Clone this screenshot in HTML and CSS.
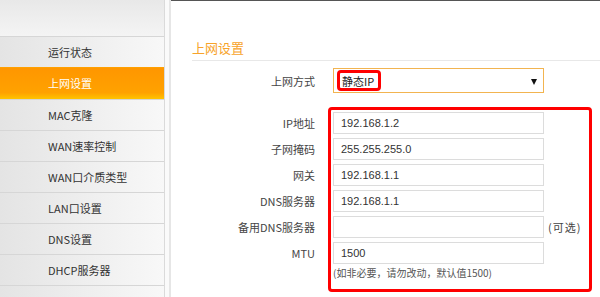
FILE: index.html
```html
<!DOCTYPE html>
<html lang="zh-CN">
<head>
  <meta charset="UTF-8" />
  <meta name="viewport" content="width=device-width, initial-scale=1.0">
  <title>上网设置</title>
  <link rel="stylesheet" href="styles.css">
</head>
<body>

  <div class="sidebar">
    <div class="sidebar-top"></div>
    <a class="menu-item" href="#">运行状态</a>
    <a class="menu-item active" href="#">上网设置</a>
    <a class="menu-item" href="#">MAC克隆</a>
    <a class="menu-item" href="#">WAN速率控制</a>
    <a class="menu-item" href="#">WAN口介质类型</a>
    <a class="menu-item" href="#">LAN口设置</a>
    <a class="menu-item" href="#">DNS设置</a>
    <a class="menu-item" href="#">DHCP服务器</a>
    <a class="menu-item last" href="#"></a>
  </div>

  <div class="divider"></div>

  <div class="main">
    <h1>上网设置</h1>

    <div class="form">
      <label>上网方式</label>
      <div class="select">
        <span class="select-value">静态IP</span>
        <span class="select-arrow"></span>
        <span class="mark mark-small"></span>
      </div>
      <span></span>

      <div class="fields">
        <label>IP地址</label>
        <div class="input">192.168.1.2</div>
        <span></span>

        <label>子网掩码</label>
        <div class="input">255.255.255.0</div>
        <span></span>

        <label>网关</label>
        <div class="input">192.168.1.1</div>
        <span></span>

        <label>DNS服务器</label>
        <div class="input">192.168.1.1</div>
        <span></span>

        <label>备用DNS服务器</label>
        <div class="input"></div>
        <span class="hint">(可选)</span>

        <label>MTU</label>
        <div class="input">1500</div>
        <span></span>

        <span></span>
        <div class="note">(如非必要，请勿改动，默认值1500)</div>
        <span></span>

        <span class="mark mark-big"></span>
      </div>
    </div>
  </div>

</body>
</html>
```

FILE: styles.css
```css
* {
  box-sizing: border-box;
}
body {
  margin: 0;
  font-family: "Noto Sans CJK SC", "Noto Sans", sans-serif;
  background: #fff;
  display: flex;
  height: 297px;
  overflow: hidden;
}

.sidebar {
  width: 165px;
  height: 297px;
  flex-shrink: 0;
  overflow: hidden;
  background: linear-gradient(to right, #e4e4e4, #f8f8f8);
  border-right: 1px solid #dadada;
  display: flex;
  flex-direction: column;
}
.sidebar-top {
  height: 36px;
  flex-shrink: 0;
  background: linear-gradient(to bottom, #e8e8e8, #f4f4f4);
}
.menu-item {
  height: 31px;
  flex-shrink: 0;
  border-top: 1px solid #d6d6d6;
  padding-left: 48px;
  line-height: 30px;
  font-size: 11px;
  color: #333;
  text-decoration: none;
}
.menu-item.last {
  flex-shrink: 1;
}
.menu-item.active {
  background: linear-gradient(to bottom, #ff9600, #ffa200 80%, #ffc400);
  color: #fff;
  border-top-color: #ffa000;
  height: 32px;
}

.divider {
  width: 6px;
  flex-shrink: 0;
  background: #fafafa;
  border-right: 2px solid #e6e6e6;
}

.main {
  flex-grow: 1;
  height: 297px;
  overflow: hidden;
  border-top: 1px solid #555;
  padding-left: 21px;
}

h1 {
  margin: 37px 0 0;
  height: 23px;
  line-height: 20px;
  font-size: 13px;
  font-weight: normal;
  color: #f7a32a;
  border-bottom: 1px solid #e8e8e8;
}

.form {
  margin-top: 7px;
  display: grid;
  grid-template-columns: 123px 211px auto;
  column-gap: 18px;
  align-items: center;
}

label {
  text-align: right;
  font-size: 11px;
  color: #444;
}

.select {
  position: relative;
  height: 25px;
  border: 1px solid #f2b450;
  display: flex;
  align-items: center;
  justify-content: space-between;
  padding: 0 6px 0 8px;
}
.select-value {
  font-size: 11px;
  color: #222;
}
.select-arrow {
  width: 0;
  height: 0;
  border-left: 3px solid transparent;
  border-right: 3px solid transparent;
  border-top: 6px solid #111;
  margin-top: 2px;
}

.fields {
  grid-column: 1 / 4;
  position: relative;
  margin-top: 19px;
  display: grid;
  grid-template-columns: 123px 211px auto;
  column-gap: 18px;
  row-gap: 4px;
  align-items: center;
}

.input {
  height: 22px;
  border: 1px solid #dcdcdc;
  padding-left: 7px;
  line-height: 20px;
  font-family: "Liberation Sans", Arial, sans-serif;
  font-size: 11px;
  color: #333;
}

.hint {
  font-size: 11px;
  color: #444;
  letter-spacing: 1px;
  margin-left: -14px;
}

.note {
  font-size: 10px;
  color: #555;
  line-height: 14px;
  margin-top: -2px;
}

.mark {
  position: absolute;
  border: 3px solid #f00;
  border-radius: 4px;
}
.mark-small {
  left: 3px;
  top: 1px;
  width: 44px;
  height: 21px;
}
.mark-big {
  left: 136px;
  top: -5px;
  width: 264px;
  height: 185px;
}
```
